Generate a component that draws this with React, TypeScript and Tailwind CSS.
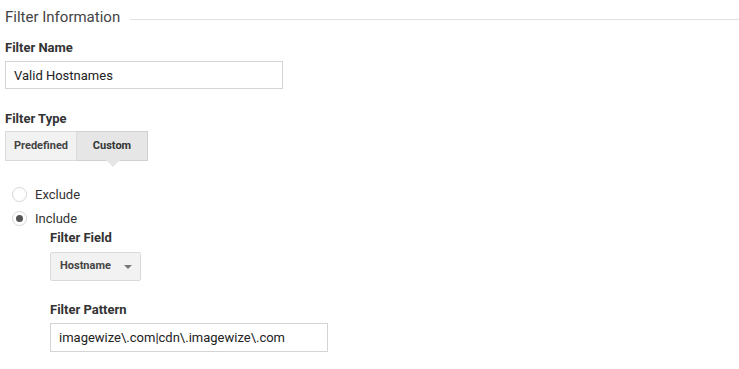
export default function App() {
  return (
    <main
      className="min-h-screen bg-white pl-[5px] pt-[7px] text-[#333]"
      style={{ fontFamily: "Roboto, 'Liberation Sans', sans-serif" }}
    >
      {/* Section header */}
      <div className="flex items-start gap-[10px]">
        <span className="text-[15px] leading-[20px] text-[#444]">Filter Information</span>
        <div className="mt-[12px] h-px flex-1 bg-[#e0e0e0]" />
      </div>

      {/* Filter name */}
      <div className="mt-[13px] text-[13px] font-bold leading-[16px]">Filter Name</div>
      <input
        readOnly
        value="Valid Hostnames"
        className="mt-[5px] block h-[28px] w-[278px] border border-[#d4d4d4] px-[8px] text-[13px] text-[#222] outline-none"
      />

      {/* Filter type */}
      <div className="mt-[22px] text-[13px] font-bold leading-[16px]">Filter Type</div>
      <div className="mt-[4px] flex">
        <button className="h-[30px] w-[72px] border border-[#dadada] bg-[#f2f2f2] text-[11px] font-bold text-[#444]">
          Predefined
        </button>
        <div className="relative">
          <button className="h-[30px] w-[71px] border border-l-0 border-[#d0d0d0] bg-[#e6e6e6] text-[11px] font-bold text-[#333]">
            Custom
          </button>
          <div className="absolute left-[29px] top-[29px] h-0 w-0 border-x-[7px] border-t-[7px] border-x-transparent border-t-[#e6e6e6]" />
        </div>
      </div>

      {/* Radios */}
      <div className="mt-[26px] flex flex-col gap-[9px] pl-[7px] text-[13px]">
        <label className="flex items-center gap-[8px] leading-[15px]">
          <span className="h-[15px] w-[15px] rounded-full border border-[#d6d6d6] bg-white" />
          <span>Exclude</span>
        </label>
        <label className="flex items-center gap-[8px] leading-[15px]">
          <span className="flex h-[15px] w-[15px] items-center justify-center rounded-full border border-[#d6d6d6] bg-white">
            <span className="h-[7px] w-[7px] rounded-full bg-[#555]" />
          </span>
          <span>Include</span>
        </label>
      </div>

      {/* Nested fields */}
      <div className="pl-[45px]">
        <div className="mt-[4px] text-[13px] font-bold leading-[16px]">Filter Field</div>
        <button className="mt-[6px] flex h-[29px] w-[91px] items-center justify-between rounded-[2px] border border-[#dadada] bg-[#f2f2f2] pl-[9px] pr-[8px] text-[11px] font-bold text-[#444]">
          <span>Hostname</span>
          <span className="h-0 w-0 border-x-[4px] border-t-[4px] border-x-transparent border-t-[#777]" />
        </button>

        <div className="mt-[21px] text-[13px] font-bold leading-[16px]">Filter Pattern</div>
        <input
          readOnly
          value="imagewize\.com|cdn\.imagewize\.com"
          className="mt-[5px] block h-[29px] w-[278px] border border-[#d4d4d4] px-[8px] text-[13px] text-[#222] outline-none"
        />
      </div>
    </main>
  );
}
